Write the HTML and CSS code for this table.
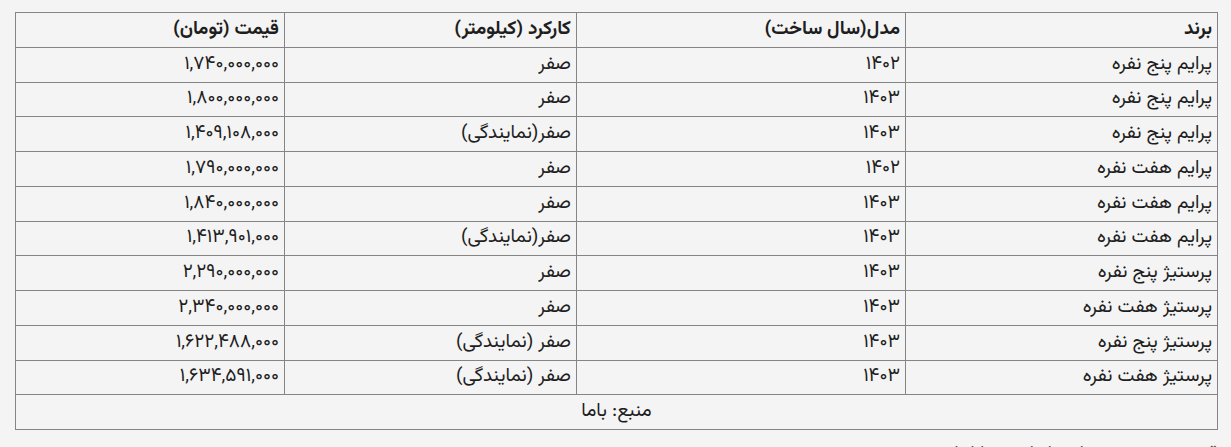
FILE: index.html
```html
<!DOCTYPE html>
<html lang="fa" dir="rtl">
<head>
<meta charset="utf-8">
<title>قیمت</title>
<link rel="stylesheet" href="styles.css">
</head>
<body>
<div class="page">
  <table class="prices">
    <colgroup>
      <col class="c-brand">
      <col class="c-model">
      <col class="c-km">
      <col class="c-price">
    </colgroup>
    <thead>
      <tr><th>برند</th><th>مدل(سال ساخت)</th><th>کارکرد (کیلومتر)</th><th>قیمت (تومان)</th></tr>
    </thead>
    <tbody>
      <tr><td>پرایم پنج نفره</td><td>۱۴۰۲</td><td>صفر</td><td>۱,۷۴۰,۰۰۰,۰۰۰</td></tr>
      <tr><td>پرایم پنج نفره</td><td>۱۴۰۳</td><td>صفر</td><td>۱,۸۰۰,۰۰۰,۰۰۰</td></tr>
      <tr><td>پرایم پنج نفره</td><td>۱۴۰۳</td><td>صفر(نمایندگی)</td><td>۱,۴۰۹,۱۰۸,۰۰۰</td></tr>
      <tr><td>پرایم هفت نفره</td><td>۱۴۰۲</td><td>صفر</td><td>۱,۷۹۰,۰۰۰,۰۰۰</td></tr>
      <tr><td>پرایم هفت نفره</td><td>۱۴۰۳</td><td>صفر</td><td>۱,۸۴۰,۰۰۰,۰۰۰</td></tr>
      <tr><td>پرایم هفت نفره</td><td>۱۴۰۳</td><td>صفر(نمایندگی)</td><td>۱,۴۱۳,۹۰۱,۰۰۰</td></tr>
      <tr><td>پرستیژ پنج نفره</td><td>۱۴۰۳</td><td>صفر</td><td>۲,۲۹۰,۰۰۰,۰۰۰</td></tr>
      <tr><td>پرستیژ هفت نفره</td><td>۱۴۰۳</td><td>صفر</td><td>۲,۳۴۰,۰۰۰,۰۰۰</td></tr>
      <tr><td>پرستیژ پنج نفره</td><td>۱۴۰۳</td><td>صفر (نمایندگی)</td><td>۱,۶۲۲,۴۸۸,۰۰۰</td></tr>
      <tr><td>پرستیژ هفت نفره</td><td>۱۴۰۳</td><td>صفر (نمایندگی)</td><td>۱,۶۳۴,۵۹۱,۰۰۰</td></tr>
      <tr><td class="source" colspan="4">منبع: باما</td></tr>
    </tbody>
  </table>
  <p class="after">قیمت روز خودروهای داخلی در بازار امروز</p>
</div>
</body>
</html>
```

FILE: styles.css
```css
html, body {
  margin: 0;
  padding: 0;
  background: #f4f4f4;
  height: 447px;
  overflow: hidden;
}

.page {
  padding: 12px 13px 0 16px;
  font-family: "Vazirmatn", "Noto Sans Arabic", "DejaVu Sans", sans-serif;
  color: #1e1e1e;
}

.prices {
  width: 1202px;
  border-collapse: collapse;
  table-layout: fixed;
  direction: rtl;
  font-size: 19px;
}

.c-brand { width: 312px; }
.c-model { width: 329px; }
.c-km { width: 292px; }
.c-price { width: 269px; }

.prices th,
.prices td {
  border: 1px solid #858585;
  height: 34.75px;
  padding: 0 5px;
  text-align: right;
  vertical-align: middle;
  line-height: 24px;
  box-sizing: border-box;
}

.prices th {
  font-weight: bold;
}

.prices td.source {
  text-align: center;
}

.after {
  margin: 10px 0 0;
  font-size: 19px;
  color: #555;
  text-align: right;
}
```
